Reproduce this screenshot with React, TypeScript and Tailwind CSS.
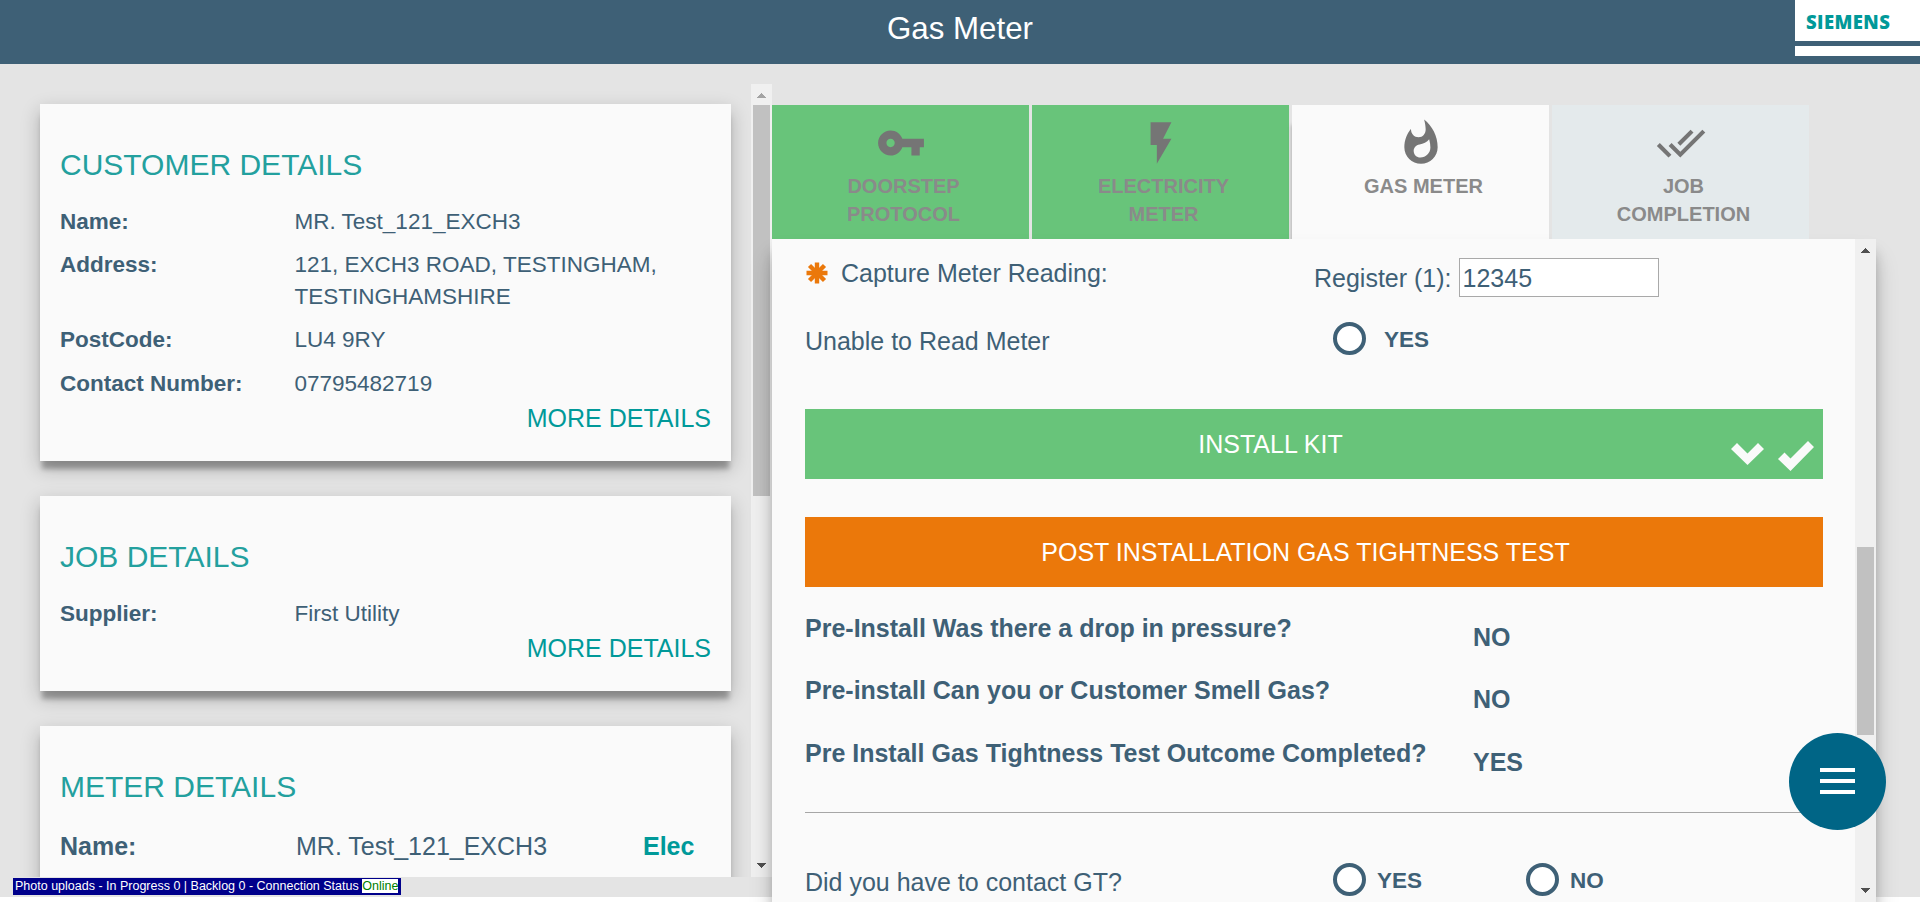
import React from "react";

type RowProps = { label: string; children: React.ReactNode; className?: string };

function Row({ label, children, className = "" }: RowProps) {
  return (
    <div className={`flex text-[22.5px] leading-[32px] ${className}`}>
      <div className="w-[234.5px] shrink-0 font-bold">{label}</div>
      <div>{children}</div>
    </div>
  );
}

function Card({ title, children, className = "" }: { title: string; children: React.ReactNode; className?: string }) {
  return (
    <section
      className={`shrink-0 bg-[#fafafa] px-5 pt-[44px] shadow-[0_10px_5px_-2px_rgba(0,0,0,0.27),0_7px_18px_0px_rgba(0,0,0,0.24)] ${className}`}
    >
      <h2 className="text-[30px] leading-[34px] text-[#23a09e]">{title}</h2>
      {children}
    </section>
  );
}

function MoreDetails() {
  return <div className="mt-px text-right text-[25px] leading-[34px] text-[#009999]">MORE DETAILS</div>;
}

function Arrow({ up, className }: { up?: boolean; className: string }) {
  return (
    <svg width="9" height="5" viewBox="0 0 9 5" className={className} shapeRendering="crispEdges">
      <path d={up ? "M0 5L4.5 0L9 5z" : "M0 0L4.5 5L9 0z"} fill="currentColor" />
    </svg>
  );
}

const icons = {
  key: "M12.65 10C11.83 7.67 9.61 6 7 6c-3.31 0-6 2.69-6 6s2.69 6 6 6c2.61 0 4.83-1.67 5.65-4H17v4h4v-4h2v-4H12.65zM7 14c-1.1 0-2-.9-2-2s.9-2 2-2 2 .9 2 2-.9 2-2 2z",
  bolt: "M7 2v11h3v9l7-12h-4l4-8z",
  fire: "M13.5.67s.74 2.65.74 4.8c0 2.06-1.35 3.73-3.41 3.73-2.07 0-3.63-1.67-3.63-3.73l.03-.36C5.21 7.51 4 10.62 4 14c0 4.42 3.58 8 8 8s8-3.58 8-8C20 8.61 17.41 3.8 13.5.67zM11.71 19c-1.78 0-3.22-1.4-3.22-3.14 0-1.62 1.05-2.76 2.81-3.12 1.77-.36 3.6-1.21 4.62-2.58.39 1.29.59 2.65.59 4.04 0 2.65-2.15 4.8-4.8 4.8z",
  done: "M18 7l-1.41-1.41-6.34 6.34 1.41 1.41L18 7zm4.24-1.41L11.66 16.17 7.48 12l-1.41 1.41L11.66 19l12-12-1.42-1.41zM.41 13.41L6 19l1.41-1.41L1.83 12 .41 13.41z",
};

function Tab({ icon, lines, className }: { icon: string; lines: string[]; className: string }) {
  return (
    <div className={`flex h-[134px] w-[257px] flex-col items-center pt-[13px] ${className}`}>
      <svg width="50" height="50" viewBox="0 0 24 24" className="shrink-0 text-[#757575]">
        <path d={icon} fill="currentColor" />
      </svg>
      <div className="pl-[6px] pt-[4px] text-center text-[20px] font-bold leading-[28px] text-[#8a8a8a]">
        {lines.map((l) => (
          <div key={l}>{l}</div>
        ))}
      </div>
    </div>
  );
}

function Radio({ label, gap }: { label: string; gap: string }) {
  return (
    <div className={`flex items-start ${gap}`}>
      <span className="size-[33px] shrink-0 rounded-full border-4 border-[#3e6076] bg-white" />
      <span className="pt-[1px] text-[22.5px] font-bold leading-[33px]">{label}</span>
    </div>
  );
}

function Question({ text, answer, className = "" }: { text: string; answer: string; className?: string }) {
  return (
    <div className={`flex text-[25px] font-bold leading-[30px] ${className}`}>
      <div className="w-[668px] shrink-0">{text}</div>
      <div className="pt-[9px]">{answer}</div>
    </div>
  );
}

export default function App() {
  return (
    <div className="flex h-[902px] w-[1920px] flex-col overflow-hidden bg-white font-['Liberation_Sans',Arial,sans-serif] text-[#3e6076]">
      <header className="relative z-10 h-[64px] shrink-0 bg-[#3e6076]">
        <h1 className="pt-[11px] text-center text-[31.25px] leading-[36px] text-white">Gas Meter</h1>
        <div className="absolute right-0 top-0 flex h-[56px] w-[125px] flex-col bg-white">
          <div className="h-[41px] pl-[11px] pt-[10px] font-['Open_Sans','Noto_Sans',sans-serif] text-[18.5px] font-extrabold leading-[24px] tracking-[0.4px] text-[#009999]">
            SIEMENS
          </div>
          <div className="h-[5px] bg-[#3e6076]" />
        </div>
      </header>

      <main className="flex h-[833px] shrink-0 bg-[#e4e4e4]">
        <div className="flex w-[772px] shrink-0 flex-col pt-5">
          <div className="flex h-[793px] overflow-hidden">
            <div className="flex w-[751px] flex-col gap-[35px] pl-10 pr-5 pt-5">
              <Card title="CUSTOMER DETAILS" className="h-[357px]">
                <Row label="Name:" className="mt-[24px]">MR. Test_121_EXCH3</Row>
                <Row label="Address:" className="mt-[11px]">
                  121, EXCH3 ROAD, TESTINGHAM,
                  <br />
                  TESTINGHAMSHIRE
                </Row>
                <Row label="PostCode:" className="mt-[11px]">LU4 9RY</Row>
                <Row label="Contact Number:" className="mt-[12px]">07795482719</Row>
                <MoreDetails />
              </Card>
              <Card title="JOB DETAILS" className="h-[195px]">
                <Row label="Supplier:" className="mt-[24px]">First Utility</Row>
                <MoreDetails />
              </Card>
              <Card title="METER DETAILS" className="h-[195px]">
                <div className="mt-[26px] flex text-[25px] leading-[32px]">
                  <div className="w-[236px] font-bold">Name:</div>
                  <div className="w-[347px]">MR. Test_121_EXCH3</div>
                  <div className="font-bold text-[#009999]">Elec</div>
                </div>
              </Card>
            </div>
            <div className="flex w-[21px] flex-col items-center bg-[#f0f0f0] pt-[9px]">
              <Arrow up className="shrink-0 text-[#a3a3a3]" />
              <div className="mt-[7px] h-[391px] w-[17px] bg-[#c1c1c1]" />
              <Arrow className="mt-[367px] shrink-0 text-[#505050]" />
            </div>
          </div>
          <div className="ml-[13px] mt-[1px] flex h-[17px] w-[388px] items-start whitespace-pre bg-[#00008b] pl-[2px] pt-px text-[12.5px] leading-[14px] text-white">
            <span>Photo uploads - In Progress 0 | Backlog 0 - Connection Status </span>
            <span className="bg-white text-[#008000]">Online</span>
          </div>
        </div>

        <div className="flex w-[1104px] shrink-0 flex-col pt-[41px]">
          <div className="flex shrink-0 gap-[3px]">
            <Tab icon={icons.key} lines={["DOORSTEP", "PROTOCOL"]} className="bg-[#68c47a]" />
            <Tab icon={icons.bolt} lines={["ELECTRICITY", "METER"]} className="bg-[#68c47a]" />
            <Tab
              icon={icons.fire}
              lines={["GAS METER"]}
              className="bg-[#fafafa] shadow-[-2px_18px_4px_-2px_rgba(0,0,0,0.3)]"
            />
            <Tab icon={icons.done} lines={["JOB", "COMPLETION"]} className="relative bg-[#e4eaec]" />
          </div>

          <section className="flex h-[663px] shrink-0 bg-[#fafafa] shadow-[0_18px_24px_-2px_rgba(0,0,0,0.2),0_12px_12px_-2px_rgba(0,0,0,0.25)]">
            <div className="flex w-[1083px] flex-col pl-[33px] pr-8">
              <div className="flex h-[83px] shrink-0 text-[25px] leading-[30px]">
                <svg width="22" height="22" viewBox="-11 -11 22 22" className="ml-[1px] mt-[23px] shrink-0">
                  <g stroke="#eb780a" strokeWidth="4.4">
                    <path d="M0 -10.5V10.5M-10.5 0H10.5" />
                    <path d="M-7.5 -7.5L7.5 7.5M-7.5 7.5L7.5 -7.5" />
                  </g>
                </svg>
                <div className="w-[486px] shrink-0 pl-[13px] pt-[19px]">Capture Meter Reading:</div>
                <div className="shrink-0 pt-[24px]">Register (1):</div>
                <div className="ml-[7px] mt-[19px] h-[39px] w-[200px] shrink-0 border border-[#a9a9a9] bg-white pl-[3px] pt-[4px]">
                  12345
                </div>
              </div>
              <div className="flex h-[87px] shrink-0">
                <div className="w-[528px] pt-[4px] text-[25px] leading-[30px]">Unable to Read Meter</div>
                <div>
                  <Radio label="YES" gap="gap-[18px]" />
                </div>
              </div>

              <div className="flex h-[70px] shrink-0 items-center bg-[#68c47a] text-[25px] text-white">
                <div className="flex-1 pl-[5px] pt-[2px] text-center">INSTALL KIT</div>
                <svg width="33" height="22" viewBox="0 0 33 22" className="mt-[20px]">
                  <path d="M6 0L16.500 10.500L27 0L33 6L16.500 22L0 6z" fill="#fafafa" />
                </svg>
                <svg width="36" height="30" viewBox="0 0 36 30" className="ml-[14px] mr-[9px] mt-[24px]">
                  <path d="M0 18L6.500 11.500L12.500 17.500L30 0L36 6L12.500 30z" fill="#fafafa" />
                </svg>
              </div>
              <div className="mt-[38px] flex h-[70px] shrink-0 items-center justify-center bg-[#eb780a] pr-[17px] pt-[2px] text-[25px] text-white">
                POST INSTALLATION GAS TIGHTNESS TEST
              </div>

              <Question text="Pre-Install Was there a drop in pressure?" answer="NO" className="mt-[26px]" />
              <Question text="Pre-install Can you or Customer Smell Gas?" answer="NO" className="mt-[23px]" />
              <Question text="Pre Install Gas Tightness Test Outcome Completed?" answer="YES" className="mt-[24px]" />

              <div className="mt-[35px] h-px shrink-0 bg-[#a6a6a6]" />

              <div className="mt-[50px] flex">
                <div className="w-[528px] pt-[4px] text-[25px] leading-[30px]">Did you have to contact GT?</div>
                <div className="w-[193px]">
                  <Radio label="YES" gap="gap-[11px]" />
                </div>
                <Radio label="NO" gap="gap-[11px]" />
              </div>
            </div>
            <div className="flex w-[21px] flex-col items-center bg-[#f0f0f0] pt-[9px]">
              <Arrow up className="shrink-0 text-[#505050]" />
              <div className="mt-[294px] h-[188px] w-[17px] shrink-0 bg-[#c1c1c1]" />
              <Arrow className="mt-[153px] shrink-0 text-[#505050]" />
            </div>
          </section>
        </div>
      </main>

      <button className="fixed left-[1788.5px] top-[732.5px] flex size-[97px] flex-col items-center justify-center gap-[7px] rounded-full bg-[#006586]">
        <span className="h-[4px] w-[35px] bg-white" />
        <span className="h-[4px] w-[35px] bg-white" />
        <span className="h-[4px] w-[35px] bg-white" />
      </button>
    </div>
  );
}
